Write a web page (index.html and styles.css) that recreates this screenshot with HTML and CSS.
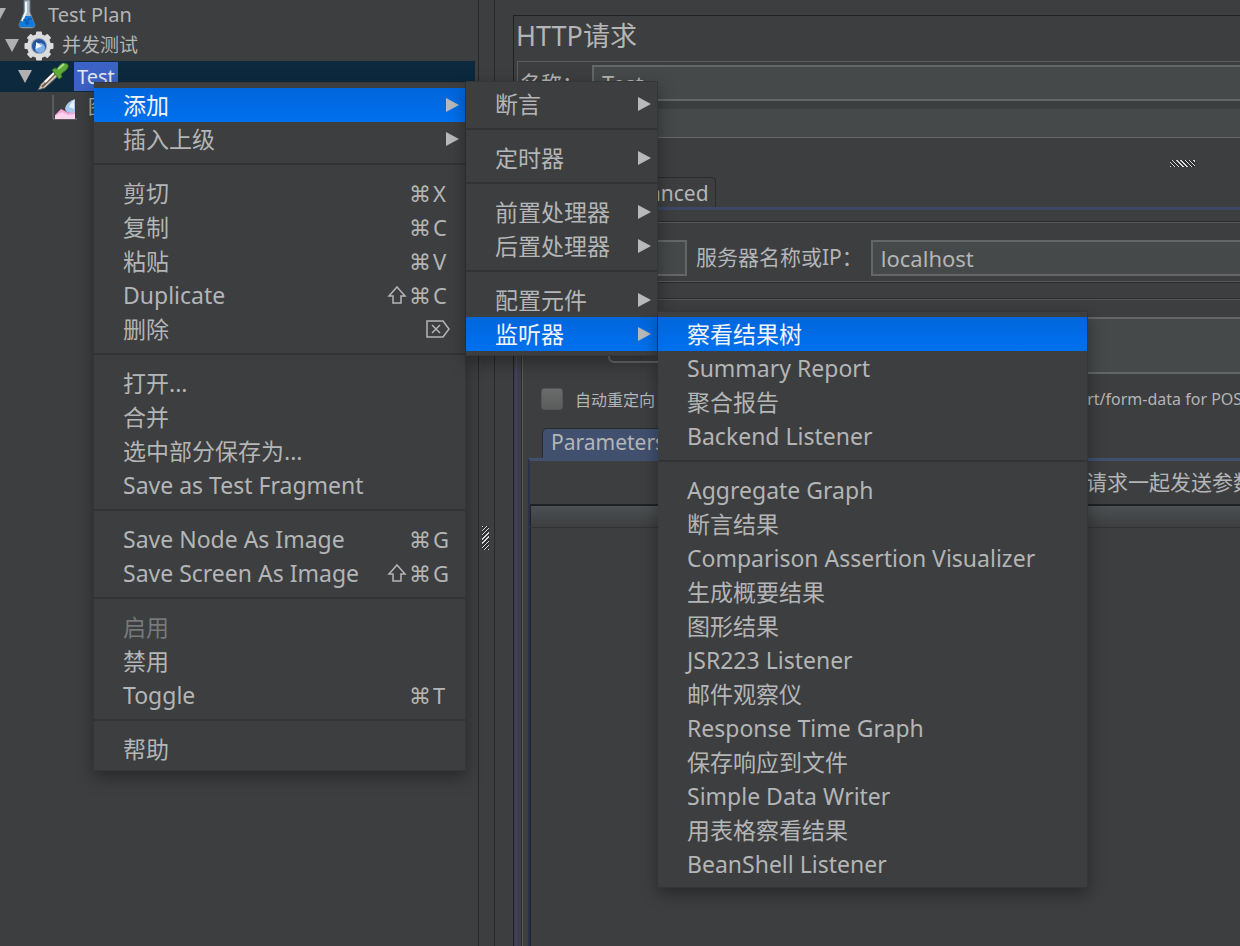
FILE: index.html
```
<!DOCTYPE html>
<html lang="zh-CN">
	<head>
		<meta charset="utf-8">
		<title>HTTP请求</title>
		<link rel="stylesheet" href="styles.css">
	</head>
	<body>
		<div class="window">
			<aside class="sidebar">
				<ul class="tree">
					<li class="node level0">
						<span class="toggle"></span>
						<svg class="icon" width="24" height="30" viewBox="0 0 24 30">
							<path d="M9 0h6v12l5 13q0 3-3 3H7q-3 0-3-3l5-13z" fill="#aebdc8" stroke="#66737c"/>
							<path d="M8 16h8l4 9q0 2-2 2H6q-2 0-2-2z" fill="#1479d8"/>
							<path d="M11 2v10l-4 9" stroke="#edf6fc" stroke-width="2" fill="none"/>
							<path d="M8 20h3v4h2v-5h4" stroke="#0b4fa5" fill="none"/>
						</svg>
						<span class="label">Test Plan</span>
					</li>
					<li class="node level1">
						<span class="toggle"></span>
						<svg class="icon" width="30" height="30" viewBox="-15 -15 30 30">
							<g fill="#dcdcdc">
								<circle r="12"/>
								<rect x="-3" y="-14.500" width="6" height="29" rx="1"/>
								<rect x="-3" y="-14.500" width="6" height="29" rx="1" transform="rotate(45)"/>
								<rect x="-3" y="-14.500" width="6" height="29" rx="1" transform="rotate(90)"/>
								<rect x="-3" y="-14.500" width="6" height="29" rx="1" transform="rotate(135)"/>
							</g>
							<circle r="8" fill="#9aa3b5"/>
							<circle r="7" fill="#2453a4"/>
							<circle cx="1" cy="2" r="5" fill="#7fb0ea"/>
							<path d="M-3-4L3 0L-3 3z" fill="#f2f7ff"/>
						</svg>
						<span class="label">并发测试</span>
					</li>
					<li class="node level2 selected">
						<span class="toggle"></span>
						<svg class="icon" width="32" height="30" viewBox="0 0 32 30">
							<path d="M1 28l3-6L18 9l4 4L8 26z" fill="#c9cbc4" stroke="#565850"/>
							<path d="M5 25L18 12" stroke="#7c5c48" stroke-width="2"/>
							<path d="M8 20L18 10" stroke="#fff" stroke-width="2"/>
							<path d="M15 8l3-2 2 1 4-5q3-2 6 0t-1 6l-5 4 1 3-3 2z" fill="#5fa83a" stroke="#3b7222"/>
							<path d="M21 7l6-5" stroke="#a9df86" stroke-width="2"/>
						</svg>
						<span class="label">Test</span>
					</li>
					<li class="node level3">
						<svg class="icon" width="26" height="26" viewBox="0 0 26 26">
							<path d="M1 0v24h24" fill="none" stroke="#77797a"/>
							<path d="M3 24v-4l6-6 4 2 4 2 6-2v8z" fill="#f3a6d6"/>
							<path d="M3 24v-3l7-4 6 3 7-1v5z" fill="#fbd3ec"/>
							<path d="M13 14q1-7 10-10v13q-8 3-10-3z" fill="#a9c8ee"/>
							<path d="M17 12q1-4 5-7v9z" fill="#e6f1ff"/>
						</svg>
						<span class="label">图形结果</span>
					</li>
				</ul>
			</aside>

			<div class="divider"><span class="grip grip-tall"></span></div>

			<main class="sampler">
				<h1>HTTP请求</h1>
				<div class="general">
					<div class="name-row">
						<label for="name">名称：</label>
						<input type="text" id="name" class="field" value="Test">
					</div>
					<div class="name-row">
						<label for="comments">注释：</label>
						<input type="text" id="comments" class="field comments">
					</div>
				</div>
				<div class="grip-row"><span class="grip grip-wide"></span></div>
				<div class="tabs">
					<button class="tab" type="button">Basic</button>
					<button class="tab" type="button">Advanced</button>
				</div>
				<div class="tab-panel">
					<div class="box server">
						<input type="text" class="field protocol" aria-label="协议">
						<label for="server">服务器名称或IP：</label>
						<input type="text" id="server" class="field host" value="localhost">
					</div>
					<div class="box request">
						<div class="path-row">
							<select class="method" aria-label="方法"><option>GET</option></select>
							<input type="text" class="field path" aria-label="路径">
						</div>
						<div class="options">
							<label><input type="checkbox" class="check">自动重定向</label>
							<label><input type="checkbox" class="check">跟随重定向</label>
							<label><input type="checkbox" class="check">Use KeepAlive</label>
							<label><input type="checkbox" class="check">Use multipart/form-data for POST</label>
						</div>
						<div class="tabs inner-tabs">
							<button class="tab active" type="button">Parameters</button>
							<button class="tab" type="button">Body Data</button>
						</div>
						<div class="params">
							<h2>同请求一起发送参数：</h2>
							<table class="grid">
								<thead><tr><th></th></tr></thead>
								<tbody><tr><td></td></tr></tbody>
							</table>
						</div>
					</div>
				</div>
			</main>
		</div>

		<!-- context menu with its two open submenus -->
		<div class="menu menu-main">
			<button class="item active" type="button">添加<span class="arrow"></span></button>
			<button class="item" type="button">插入上级<span class="arrow"></span></button>
			<hr>
			<button class="item" type="button">剪切<span class="keys">⌘<b>X</b></span></button>
			<button class="item" type="button">复制<span class="keys">⌘<b>C</b></span></button>
			<button class="item" type="button">粘贴<span class="keys">⌘<b>V</b></span></button>
			<button class="item" type="button">Duplicate<span class="keys"><svg width="20" height="20" viewBox="0 0 20 20"><path d="M10 2L18 11H14V18H6V11H2z"/></svg>⌘<b>C</b></span></button>
			<button class="item" type="button">删除<span class="keys"><svg width="24" height="20" viewBox="0 0 24 20"><path d="M1 2H17L23 10L17 18H1zM6 6L14 14M14 6L6 14"/></svg></span></button>
			<hr>
			<button class="item" type="button">打开...</button>
			<button class="item" type="button">合并</button>
			<button class="item" type="button">选中部分保存为...</button>
			<button class="item" type="button">Save as Test Fragment</button>
			<hr>
			<button class="item" type="button">Save Node As Image<span class="keys">⌘<b>G</b></span></button>
			<button class="item" type="button">Save Screen As Image<span class="keys"><svg width="20" height="20" viewBox="0 0 20 20"><path d="M10 2L18 11H14V18H6V11H2z"/></svg>⌘<b>G</b></span></button>
			<hr>
			<button class="item" type="button" disabled>启用</button>
			<button class="item" type="button">禁用</button>
			<button class="item" type="button">Toggle<span class="keys">⌘<b>T</b></span></button>
			<hr>
			<button class="item" type="button">帮助</button>
		</div>

		<div class="menu menu-add">
			<button class="item" type="button">断言<span class="arrow"></span></button>
			<hr>
			<button class="item" type="button">定时器<span class="arrow"></span></button>
			<hr>
			<button class="item" type="button">前置处理器<span class="arrow"></span></button>
			<button class="item" type="button">后置处理器<span class="arrow"></span></button>
			<hr>
			<button class="item" type="button">配置元件<span class="arrow"></span></button>
			<button class="item active" type="button">监听器<span class="arrow"></span></button>
		</div>

		<div class="menu menu-listener">
			<button class="item active" type="button">察看结果树</button>
			<button class="item" type="button">Summary Report</button>
			<button class="item" type="button">聚合报告</button>
			<button class="item" type="button">Backend Listener</button>
			<hr>
			<button class="item" type="button">Aggregate Graph</button>
			<button class="item" type="button">断言结果</button>
			<button class="item" type="button">Comparison Assertion Visualizer</button>
			<button class="item" type="button">生成概要结果</button>
			<button class="item" type="button">图形结果</button>
			<button class="item" type="button">JSR223 Listener</button>
			<button class="item" type="button">邮件观察仪</button>
			<button class="item" type="button">Response Time Graph</button>
			<button class="item" type="button">保存响应到文件</button>
			<button class="item" type="button">Simple Data Writer</button>
			<button class="item" type="button">用表格察看结果</button>
			<button class="item" type="button">BeanShell Listener</button>
		</div>
	</body>
</html>
```
FILE: styles.css
```
* {
	box-sizing: border-box;
}

body {
	margin: 0;
	background-color: #3c3e3f;
	color: #b4b5b6;
	font-family: "Noto Sans", "Noto Sans CJK SC", sans-serif;
	font-size: 21px;
	overflow: hidden;
}

button, input, select {
	font: inherit;
	color: inherit;
}

.window {
	display: flex;
	height: 100vh;
}

/* tree */

.sidebar {
	flex: none;
	width: 479px;
	padding-right: 3px;
	border-right: 1px solid #262829;
	overflow: hidden;
}

.tree {
	list-style: none;
	margin: -1px 0 0;
	padding: 0;
}

.node {
	display: flex;
	align-items: center;
	height: 31px;
	font-size: 19px;
	line-height: 29px;
	white-space: nowrap;
}

.level0 {
	margin-left: -8px;
	font-size: 20px;
}

.level1 {
	padding-left: 5px;
}

.level2 {
	padding-left: 18px;
	font-size: 20px;
}

.level3 {
	padding-left: 52px;
}

.toggle {
	flex: none;
	border: 7px solid transparent;
	border-top: 13px solid #b0b0b0;
	border-bottom: 0;
}

.icon {
	flex: none;
	margin: 0 5px;
}

.level0 .icon {
	margin: 0 6px 0 9px;
}

.level3 .icon {
	margin: 0 7px 0 0;
}

.label {
	padding: 0 3px;
}

.selected {
	background-color: #0d293e;
}

.selected .label {
	background-color: #3b62c4;
	color: #e4e8f0;
}

.divider {
	flex: none;
	display: flex;
	align-items: center;
	justify-content: center;
	width: 16px;
	padding: 130px 2px 0 0;
	border-right: 1px solid #262829;
}

.grip {
	background: repeating-linear-gradient(-45deg, #d8d8d8 0 1px, #303233 1px 3px);
}

.grip-tall {
	width: 7px;
	height: 24px;
}

.grip-wide {
	width: 25px;
	height: 7px;
	background: repeating-linear-gradient(45deg, #d8d8d8 0 1px, #303233 1px 3px);
}

/* right pane */

.sampler {
	flex: 1;
	min-width: 0;
	display: flex;
	flex-direction: column;
	margin: 15px 0 0 18px;
	border: solid #1f2122;
	border-width: 1px 0 0 1px;
	white-space: nowrap;
	overflow: hidden;
}

h1 {
	margin: 0;
	padding-left: 2px;
	font-size: 27px;
	font-weight: normal;
	line-height: 39px;
}

.general {
	display: flex;
	flex-direction: column;
	gap: 8px;
	margin: 6px 0 0 3px;
	padding-top: 3px;
	border: solid #5a5c5d;
	border-width: 1px 0 0 1px;
}

.name-row {
	display: flex;
}

.name-row label {
	width: 74px;
	padding-left: 2px;
	line-height: 36px;
	height: 29px;
}

.field {
	min-width: 0;
	height: 36px;
	padding: 0 8px;
	border: solid #646667;
	border-width: 2px 0 2px 2px;
	background-color: #454949;
	font-size: 22px;
}

.name-row .field {
	flex: 1;
}

.name-row .comments {
	height: 29px;
	border-width: 0 0 1px;
}

.grip-row {
	display: flex;
	align-items: center;
	justify-content: flex-end;
	height: 39px;
	padding: 12px 45px 0 0;
}

.tabs {
	display: flex;
	padding-left: 15px;
}

.tab {
	height: 30px;
	padding: 0 6px;
	border: 1px solid #292b2c;
	border-bottom: 0;
	border-radius: 5px 5px 0 0;
	background: none;
	line-height: 28px;
}

.tabs .tab:first-child {
	min-width: 76px;
}

.inner-tabs .tab {
	padding: 0 8px 3px;
	line-height: 26px;
}

.tab.active {
	background-color: #41506f;
}

.tab-panel {
	flex: 1;
	display: flex;
	flex-direction: column;
	gap: 17px;
	margin-left: 2px;
	padding: 12px 0 0 5px;
	border: solid #3f4766;
	border-width: 3px 0 0 1px;
	min-height: 0;
}

.box {
	border: 1px solid #55585a;
	border-right: 0;
	box-shadow: 0 0 0 1px #2a2c2d;
}

.server {
	display: flex;
	align-items: center;
	padding: 17px 0 5px;
}

.server label {
	line-height: 28px;
	padding-bottom: 2px;
}

.protocol {
	width: 92px;
	margin: 0 9px 0 72px;
	border-right-width: 2px;
}

.host {
	flex: 1;
	margin-left: 8px;
}

.request {
	flex: 1;
	display: flex;
	flex-direction: column;
	padding-top: 17px;
	border-bottom: 0;
}

.path-row {
	display: flex;
	align-items: center;
	gap: 80px;
	padding-left: 85px;
}

.method {
	width: 130px;
	height: 34px;
	border: 2px solid #646667;
	border-radius: 6px;
	background-color: #3c3e3f;
}

.path {
	flex: 1;
	height: 57px;
}

.options {
	display: flex;
	align-items: center;
	gap: 18px;
	height: 50px;
	padding-left: 18px;
	font-size: 16px;
}

.options label {
	display: flex;
	align-items: center;
	gap: 12px;
}

.check {
	appearance: none;
	width: 22px;
	height: 22px;
	margin: 0;
	border: 1px solid #55585a;
	border-radius: 3px;
	background: linear-gradient(#6a6c6b, #5b5d5d);
}

.inner-tabs {
	margin-top: 4px;
	padding-left: 19px;
}

.params {
	flex: 1;
	display: flex;
	flex-direction: column;
	margin-left: 5px;
	border: solid #2c3147;
	border-width: 3px 0 0 2px;
	border-top-color: #41506f;
}

h2 {
	margin: 0;
	padding-left: 535px;
	font-size: 21px;
	font-weight: normal;
	line-height: 43px;
}

.grid {
	flex: 1;
	width: 100%;
	border-collapse: collapse;
	border-top: 2px solid #1f2122;
	border-left: 1px solid #1f2122;
}

.grid th {
	height: 22px;
	padding: 0;
	background: linear-gradient(#4c5052, #3c3e3f);
	border-bottom: 1px solid #303233;
}

/* menus */

.menu {
	position: absolute;
	padding: 5px 0 4px;
	background-color: #3c3e3f;
	border: 1px solid #343637;
	border-left: 0;
	box-shadow: 0 6px 16px rgba(0, 0, 0, .35);
	font-size: 23px;
}

.menu-main {
	left: 94px;
	top: 82px;
	width: 372px;
}

.menu-add {
	left: 466px;
	top: 81px;
	width: 192px;
}

.menu-listener {
	left: 658px;
	top: 311px;
	width: 430px;
	padding-bottom: 6px;
}

.item {
	display: flex;
	align-items: center;
	justify-content: space-between;
	width: 100%;
	height: 34px;
	padding: 0 6px 0 29px;
	border: 0;
	background: none;
	line-height: 34px;
	text-align: left;
	white-space: nowrap;
}

.item.active {
	background: linear-gradient(#0066dc, #0070ee);
	color: #f0f4fa;
}

.item:disabled {
	color: #77797a;
}

.menu hr {
	height: 2px;
	margin: 7px 0 11px;
	border: 0;
	background-color: #313334;
}

.arrow {
	border: 7px solid transparent;
	border-left: 13px solid #b8b9ba;
	border-right: 0;
}

.keys {
	display: flex;
	align-items: center;
	gap: 2px;
	padding-right: 9px;
	font-family: "Noto Sans", "DejaVu Sans", sans-serif;
	font-size: 22px;
}

.keys b {
	width: 17px;
	font-weight: normal;
}

.keys path {
	fill: none;
	stroke: #b4b5b6;
	stroke-width: 1.5;
}
```
